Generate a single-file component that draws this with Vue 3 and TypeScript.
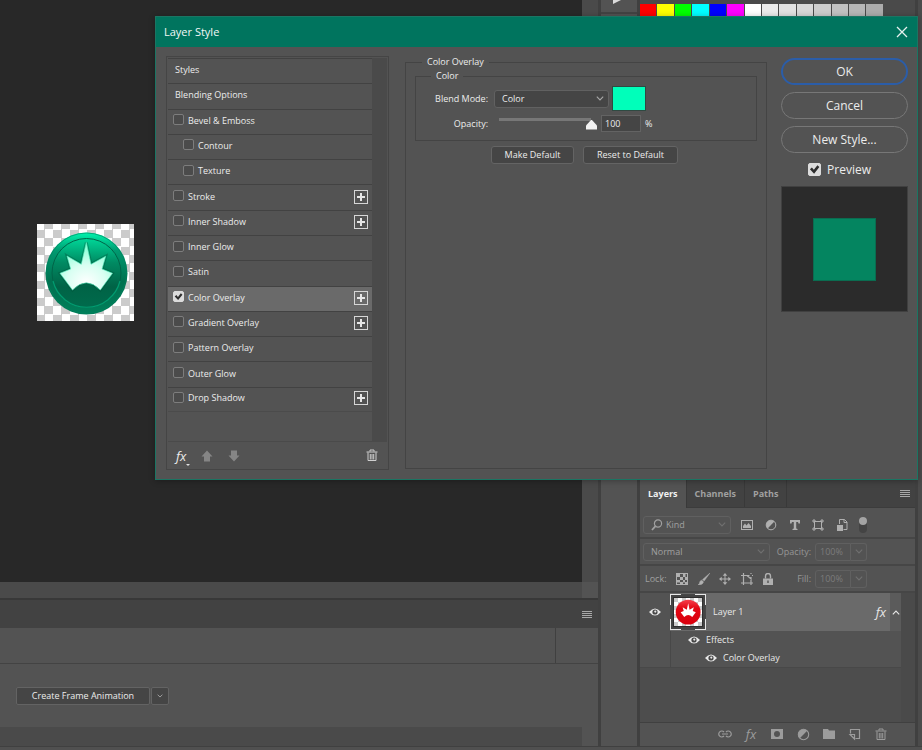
<script setup lang="ts">
import { ref } from 'vue'

interface Effect {
  name: string
  on: boolean
  nested?: boolean
  plus?: boolean
}

const effects = ref<Effect[]>([
  { name: 'Bevel & Emboss', on: false },
  { name: 'Contour', on: false, nested: true },
  { name: 'Texture', on: false, nested: true },
  { name: 'Stroke', on: false, plus: true },
  { name: 'Inner Shadow', on: false, plus: true },
  { name: 'Inner Glow', on: false },
  { name: 'Satin', on: false },
  { name: 'Color Overlay', on: true, plus: true },
  { name: 'Gradient Overlay', on: false, plus: true },
  { name: 'Pattern Overlay', on: false },
  { name: 'Outer Glow', on: false },
  { name: 'Drop Shadow', on: false, plus: true },
])
const selected = ref('Color Overlay')

const swatches: string[] = [
  '#ff0000', '#ffff00', '#00ff00', '#00ffff', '#0000ff', '#ff00ff', '#ffffff',
  '#ebebeb', '#e1e1e1', '#d7d7d7', '#cccccc', '#c2c2c2', '#b7b7b7', '#acacac',
]

const tabs = ['Layers', 'Channels', 'Paths']
const activeTab = ref('Layers')

const blendMode = ref('Color')
const opacity = ref(100)
const preview = ref(true)
</script>

<template>
  <div class="app">
    <svg class="defs" aria-hidden="true">
      <defs>
        <linearGradient id="rim" x1="0" y1="0" x2="0" y2="1">
          <stop offset="0" stop-color="#00f5ae" />
          <stop offset="0.22" stop-color="#009a70" />
          <stop offset="0.6" stop-color="#00704f" />
          <stop offset="1" stop-color="#007f5a" />
        </linearGradient>
        <linearGradient id="face" x1="0" y1="0" x2="0" y2="1">
          <stop offset="0" stop-color="#00d698" />
          <stop offset="0.35" stop-color="#008a62" />
          <stop offset="0.7" stop-color="#006346" />
          <stop offset="1" stop-color="#006b4c" />
        </linearGradient>
        <radialGradient id="crown" cx="0.5" cy="0.85" r="0.75">
          <stop offset="0" stop-color="#ffffff" />
          <stop offset="0.5" stop-color="#d9fff2" />
          <stop offset="1" stop-color="#8dffd8" />
        </radialGradient>
        <linearGradient id="red" x1="0" y1="0" x2="0" y2="1">
          <stop offset="0" stop-color="#f5404d" />
          <stop offset="0.35" stop-color="#e30613" />
          <stop offset="1" stop-color="#d9000d" />
        </linearGradient>
        <path
          id="crown-shape"
          d="M49.3 18.5 54 40.3 68.7 32.2 65 45 75.5 49.3 63.3 66Q49.3 51.500 35.500 66L23 49.300 33.700 45 30 32 44.300 40.300Z"
        />
        <symbol id="eye" viewBox="0 0 12 8">
          <path d="M0 4Q6-3.200 12 4 6 11.200 0 4Z" fill="currentColor" />
          <circle cx="6" cy="4" r="2.600" fill="#484848" />
          <circle cx="6.300" cy="3.600" r="1.100" fill="currentColor" />
        </symbol>
        <symbol id="trash" viewBox="0 0 12 13">
          <g fill="none" stroke="currentColor">
            <path d="M0.500 3H11.500M4 2.500V1H8V2.500" />
            <path d="M2 3.500V11.500H10V3.500M4.300 5V10.500M6 5V10.500M7.700 5V10.500" />
          </g>
        </symbol>
        <symbol id="chevron" viewBox="0 0 8 5">
          <path d="M0.800 0.700 4 3.900 7.200 0.700" fill="none" stroke="currentColor" stroke-width="1.100" />
        </symbol>
        <symbol id="half" viewBox="0 0 12 12">
          <circle cx="6" cy="6" r="4.800" fill="none" stroke="currentColor" />
          <path d="M9.400 2.600A4.800 4.800 0 0 0 2.600 9.400Z" fill="currentColor" />
        </symbol>
      </defs>
    </svg>

    <main class="work">
      <div class="canvas">
        <svg class="art" viewBox="0 0 97 97" role="img" aria-label="Crown badge">
          <circle cx="49.500" cy="49.500" r="41" fill="url(#rim)" />
          <circle cx="49.500" cy="49" r="40" fill="none" stroke="#00825d" stroke-opacity="0.600" />
          <circle cx="49.500" cy="49" r="34.500" fill="url(#face)" stroke="#006448" />
          <path d="M16 57A34.500 34.500 0 0 0 83 57" fill="none" stroke="#009c70" stroke-width="1.200" />
          <use href="#crown-shape" fill="#004d36" opacity="0.350" stroke="#004d36" stroke-width="3" />
          <use href="#crown-shape" fill="url(#crown)" stroke="#5cf2c3" stroke-width="0.600" />
        </svg>
      </div>
      <div class="vbar"></div>
      <div class="hbar"></div>
      <div class="corner"></div>
      <section class="timeline">
        <header>
          <button class="menu" aria-label="Timeline menu"><i></i><i></i><i></i><i></i></button>
        </header>
        <div class="ruler"><span></span></div>
        <div class="frames">
          <button class="create">Create Frame Animation</button>
          <button class="more" aria-label="Animation type"><svg width="6" height="4"><use href="#chevron" /></svg></button>
        </div>
        <div class="scroll"></div>
      </section>
    </main>

    <aside class="strip">
      <button class="play" aria-label="Actions">
        <svg width="10" height="8" viewBox="0 0 10 8"><path d="M0 0V8L10 3Z" fill="#dcdcdc" /></svg>
      </button>
    </aside>

    <aside class="panels">
      <div class="swatch-panel">
        <div class="swatches">
          <button v-for="c in swatches" :key="c" :aria-label="c" :style="{ background: c }"></button>
        </div>
      </div>

      <section class="layers">
        <nav class="tabs">
          <button
            v-for="t in tabs"
            :key="t"
            :class="{ active: t === activeTab }"
            @click="activeTab = t"
          >{{ t }}</button>
          <button class="menu" aria-label="Panel menu"><i></i><i></i><i></i><i></i></button>
        </nav>

        <div class="bar filter">
          <label class="pick kind">
            <svg width="12" height="12" viewBox="0 0 12 12">
              <g fill="none" stroke="currentColor">
                <circle cx="7" cy="4.500" r="3.600" stroke-width="1.200" />
                <path d="M4.500 7.200 1 11" stroke-width="1.800" />
              </g>
            </svg>
            <select aria-label="Filter type"><option>Kind</option></select>
            <svg class="chev" width="8" height="5"><use href="#chevron" /></svg>
          </label>
          <div class="tools">
            <button aria-label="Pixel layers">
              <svg width="12" height="12" viewBox="0 0 12 12">
                <rect x="0.500" y="1.500" width="11" height="9" fill="none" stroke="currentColor" />
                <path d="M2 9V7L4 4.500 5.500 6.500 7.500 4 10 7V9Z" fill="currentColor" />
              </svg>
            </button>
            <button aria-label="Adjustment layers"><svg width="12" height="12"><use href="#half" /></svg></button>
            <button aria-label="Type layers">
              <svg width="12" height="12" viewBox="0 0 12 12">
                <path d="M1 1H11V4.500H9.500L9 3H7.200V9.500L8.500 10V11H3.500V10L4.800 9.500V3H3L2.500 4.500H1Z" fill="currentColor" />
              </svg>
            </button>
            <button aria-label="Shape layers">
              <svg width="12" height="12" viewBox="0 0 12 12">
                <g fill="none" stroke="currentColor">
                  <path d="M2.500 2.500H9.500V9.500H2.500Z" />
                  <path d="M1 1H3V3H1ZM9 1H11V3H9ZM1 9H3V11H1ZM9 9H11V11H9Z" />
                </g>
              </svg>
            </button>
            <button aria-label="Smart objects">
              <svg width="12" height="12" viewBox="0 0 12 12">
                <path d="M3.500 5V0.500H8.500L11 3V10.500H7.500M8 0.500V3.500H11" fill="none" stroke="currentColor" />
                <path d="M1 6H7V12H1Z" fill="currentColor" />
              </svg>
            </button>
          </div>
          <button class="toggle" aria-label="Toggle filter"><span></span></button>
        </div>

        <div class="bar">
          <label class="pick mode">
            <select aria-label="Layer blend mode"><option>Normal</option></select>
            <svg class="chev" width="8" height="5"><use href="#chevron" /></svg>
          </label>
          <div class="amount">
            <label for="layer-opacity">Opacity:</label>
            <input id="layer-opacity" value="100%" />
            <button aria-label="Opacity slider"><svg width="8" height="5"><use href="#chevron" /></svg></button>
          </div>
        </div>

        <div class="bar">
          <span class="lock">Lock:</span>
          <div class="tools locks">
            <button aria-label="Lock transparent pixels">
              <svg width="12" height="12" viewBox="0 0 12 12">
                <rect x="0.500" y="0.500" width="11" height="11" fill="none" stroke="currentColor" />
                <path d="M1 1H4V4H1ZM7 1H9.500V4H7ZM4 4H7V7H4ZM9 4H11V7H9ZM1 7H4V9.500H1ZM7 7H9V9.500H7ZM4 9H7V11H4ZM9 9H11V11H9Z" fill="currentColor" />
              </svg>
            </button>
            <button aria-label="Lock image pixels">
              <svg width="12" height="12" viewBox="0 0 12 12">
                <path d="M12 0 6.200 8 4.500 6.500ZM3.800 7.200 5.500 8.800Q5 12 0 12 1.800 10.500 1.800 8.700 2.500 7.200 3.800 7.200Z" fill="currentColor" stroke="currentColor" stroke-width="0.400" />
              </svg>
            </button>
            <button aria-label="Lock position">
              <svg width="12" height="12" viewBox="0 0 12 12">
                <path d="M6 1V11M1 6H11" stroke="currentColor" />
                <path d="M6 0 8.300 2.700H3.700ZM6 12 8.300 9.300H3.700ZM0 6 2.700 3.700V8.300ZM12 6 9.300 3.700V8.300Z" fill="currentColor" />
              </svg>
            </button>
            <button aria-label="Lock artboard nesting">
              <svg width="12" height="12" viewBox="0 0 12 12">
                <path d="M0 2.500H8.500M2.500 0V12M0 10H12M10 5V12M6 2.500 10 6V4M10 0V1M11 2.500H12" fill="none" stroke="currentColor" stroke-width="1.200" />
              </svg>
            </button>
            <button aria-label="Lock all">
              <svg width="12" height="12" viewBox="0 0 12 12">
                <path d="M3.500 5.500V3A2.500 2.500 0 0 1 8.500 3V5.500" fill="none" stroke="currentColor" stroke-width="1.400" />
                <path d="M1 5.500H11V12H1ZM5.300 7.500V10H6.700V7.500Z" fill="currentColor" fill-rule="evenodd" />
              </svg>
            </button>
          </div>
          <div class="amount">
            <label for="layer-fill">Fill:</label>
            <input id="layer-fill" value="100%" />
            <button aria-label="Fill slider"><svg width="8" height="5"><use href="#chevron" /></svg></button>
          </div>
        </div>

        <div class="stack">
          <div class="rows">
            <div class="layer">
              <button class="vis" aria-label="Layer visibility"><svg width="12" height="8"><use href="#eye" /></svg></button>
              <div class="entry">
                <span class="thumb">
                  <svg viewBox="0 0 97 97" aria-hidden="true">
                    <circle cx="49" cy="49" r="43" fill="url(#red)" />
                    <use href="#crown-shape" fill="#fff" />
                  </svg>
                </span>
                <span class="name">Layer 1</span>
                <span class="fx">fx</span>
              </div>
              <button class="fold" aria-label="Collapse effects"><svg width="8" height="5"><use href="#chevron" /></svg></button>
            </div>
            <div class="sub">
              <div>
                <svg width="12" height="8"><use href="#eye" /></svg><span>Effects</span>
              </div>
              <div class="deep">
                <svg width="12" height="8"><use href="#eye" /></svg><span>Color Overlay</span>
              </div>
            </div>
          </div>
          <div class="track"></div>
        </div>

        <footer>
          <button aria-label="Link layers">
            <svg width="14" height="14" viewBox="0 0 14 14">
              <path d="M6 5A3 3 0 1 0 6 9M8 5A3 3 0 1 1 8 9M4 7H10" fill="none" stroke="currentColor" stroke-width="1.200" />
            </svg>
          </button>
          <button class="fx" aria-label="Add layer style">fx</button>
          <button aria-label="Add mask">
            <svg width="14" height="14" viewBox="0 0 14 14">
              <path d="M1 2H13V12H1ZM7 4A3 3 0 1 0 7 10 3 3 0 1 0 7 4Z" fill="currentColor" fill-rule="evenodd" />
            </svg>
          </button>
          <button aria-label="New adjustment layer"><svg width="13" height="13"><use href="#half" /></svg></button>
          <button aria-label="New group">
            <svg width="14" height="14" viewBox="0 0 14 14">
              <path d="M1 2H6L7 3.500H13V12H1Z" fill="currentColor" />
            </svg>
          </button>
          <button aria-label="New layer">
            <svg width="14" height="14" viewBox="0 0 14 14">
              <path d="M2.500 6.500V2.500H11.500V11.500H7.500M2 7.500H6.500V12Z" fill="none" stroke="currentColor" stroke-width="1.200" />
            </svg>
          </button>
          <button aria-label="Delete layer"><svg width="12" height="13"><use href="#trash" /></svg></button>
        </footer>
      </section>
    </aside>

    <div class="edge"></div>

    <div class="dialog" role="dialog" aria-labelledby="dialog-title">
      <header class="title">
        <span id="dialog-title">Layer Style</span>
        <button aria-label="Close">
          <svg width="12" height="12" viewBox="0 0 12 12">
            <path d="M1 1 11 11M11 1 1 11" stroke="#e6f1ef" stroke-width="1.300" />
          </svg>
        </button>
      </header>
      <div class="body">
        <div class="styles">
          <div class="scroller">
            <ul>
              <li><button class="link">Styles</button></li>
              <li><button class="link">Blending Options</button></li>
              <li
                v-for="e in effects"
                :key="e.name"
                :class="{ nested: e.nested, current: e.name === selected }"
                @click="selected = e.name"
              >
                <label><input v-model="e.on" type="checkbox" />{{ e.name }}</label>
                <button v-if="e.plus" class="plus" :aria-label="'Add ' + e.name">
                  <svg width="14" height="14" viewBox="0 0 14 14">
                    <rect x="0.500" y="0.500" width="13" height="13" fill="none" stroke="#d6d6d6" />
                    <path d="M7 3V11M3 7H11" stroke="#e6e6e6" stroke-width="2" />
                  </svg>
                </button>
              </li>
            </ul>
            <div class="track"></div>
          </div>
          <div class="actions">
            <button class="fx" aria-label="Effects menu">fx<span></span></button>
            <button aria-label="Move up">
              <svg width="12" height="12" viewBox="0 0 12 12"><path d="M6 0.500 11.500 6.500H9V11.500H3V6.500H0.500Z" fill="#858585" /></svg>
            </button>
            <button aria-label="Move down">
              <svg width="12" height="12" viewBox="0 0 12 12"><path d="M6 11.500 11.500 5.500H9V0.500H3V5.500H0.500Z" fill="#858585" /></svg>
            </button>
            <button class="bin" aria-label="Delete effect"><svg width="12" height="13"><use href="#trash" /></svg></button>
          </div>
        </div>

        <fieldset class="overlay">
          <legend>Color Overlay</legend>
          <fieldset class="group">
            <legend>Color</legend>
            <div class="field blend">
              <label for="blend">Blend Mode:</label>
              <span class="pick">
                <select id="blend" v-model="blendMode"><option>Color</option><option>Normal</option></select>
                <svg class="chev" width="8" height="5"><use href="#chevron" /></svg>
              </span>
              <button class="color" aria-label="Set overlay color"></button>
            </div>
            <div class="field">
              <label for="opacity">Opacity:</label>
              <input v-model.number="opacity" class="slide" type="range" min="0" max="100" aria-label="Opacity slider" />
              <input id="opacity" v-model.number="opacity" class="num" />
              <span class="unit">%</span>
            </div>
          </fieldset>
          <div class="defaults">
            <button>Make Default</button>
            <button>Reset to Default</button>
          </div>
        </fieldset>

        <div class="side">
          <button class="ok">OK</button>
          <button>Cancel</button>
          <button>New Style...</button>
          <label><input v-model="preview" type="checkbox" />Preview</label>
          <div class="sample"><span></span></div>
        </div>
      </div>
    </div>
  </div>
</template>

<style>
body {
  background: #424242;
}
</style>

<style scoped>
.app {
  position: relative;
  box-sizing: border-box;
  min-height: 100vh;
  display: grid;
  grid-template-columns: minmax(0, 1fr) 36px 275px 4px;
  column-gap: 3px;
  border-bottom: 3px solid #505050;
  padding-bottom: 1px;
  background: #404040;
  color: #ececec;
  font: 9px/12px 'Open Sans', 'Noto Sans', sans-serif;
}
.app *,
.app *::before,
.app *::after {
  box-sizing: border-box;
}
.defs {
  position: absolute;
  width: 0;
  height: 0;
}
svg {
  display: block;
  flex: none;
}
button,
input,
select {
  margin: 0;
  padding: 0;
  border: 0;
  background: none;
  color: inherit;
  font: inherit;
  appearance: none;
}
button {
  display: flex;
  align-items: center;
  justify-content: center;
}

.work {
  display: grid;
  grid-template-columns: minmax(0, 1fr) 16px;
  grid-template-rows: minmax(0, 1fr) 16px auto;
}
.canvas {
  position: relative;
  background: #282828;
}
.art {
  position: absolute;
  left: 37px;
  top: 224px;
  width: 97px;
  height: 97px;
  background: repeating-conic-gradient(#cbcbcb 0 25%, #fff 0 50%) -1px -3px / 17px 17px;
}
.vbar,
.hbar {
  background: #4a4a4a;
}
.corner {
  background: #535353;
}
.timeline {
  grid-column: 1 / -1;
  border-top: 2px solid #383838;
  background: #535353;
}
.timeline header {
  display: flex;
  justify-content: flex-end;
  height: 28px;
  padding-right: 6px;
  background: #424242;
}
.menu i {
  display: block;
  width: 10px;
  height: 1px;
  background: #a8a8a8;
}
.menu {
  flex-direction: column;
  gap: 1px;
}
.ruler {
  display: flex;
  justify-content: flex-end;
  height: 36px;
  border-bottom: 1px solid #434343;
}
.ruler span {
  width: 43px;
  border-left: 1px solid #404040;
}
.frames {
  display: flex;
  gap: 1px;
  padding: 23px 16px 22px;
}
.frames button {
  height: 18px;
  border: 1px solid #636363;
  border-radius: 2px;
  background: #454545;
}
.frames .create {
  width: 134px;
}
.frames .more {
  width: 18px;
  color: #b0b0b0;
}
.scroll {
  height: 19px;
  margin-right: 16px;
  background: #4a4a4a;
}

.strip {
  background: #535353;
}
.play {
  width: 100%;
  height: 14px;
  align-items: flex-start;
  padding-right: 2px;
  border-bottom: 2px solid #434343;
}
.play svg {
  margin-top: -4px;
}

.panels {
  display: flex;
  flex-direction: column;
  min-width: 0;
}
.swatch-panel {
  height: 480px;
  padding-top: 4px;
  background: #4a4a4a;
}
.swatches {
  display: flex;
  gap: 1px;
  width: 243px;
}
.swatches button {
  flex: 1;
  height: 16px;
}
.edge {
  background: #4b4b4b;
}

.layers {
  flex: 1;
  display: flex;
  flex-direction: column;
  background: #535353;
  color: #a0a0a0;
}
.tabs {
  display: flex;
  height: 28px;
  background: #424242;
  border-bottom: 1px solid #3c3c3c;
  font-weight: 700;
}
.tabs button {
  padding: 0 8px;
  border-right: 1px solid #393939;
}
.tabs .active {
  height: 28px;
  background: #535353;
  color: #f2f2f2;
}
.tabs .menu {
  margin-left: auto;
  padding: 0 5px;
  border: 0;
}
.bar {
  display: flex;
  align-items: center;
  height: 27px;
  padding: 0 48px 0 3px;
  border-bottom: 2px solid #464646;
}
.filter {
  height: 31px;
  padding-top: 4px;
}
.pick {
  display: flex;
  align-items: center;
  gap: 3px;
  height: 18px;
  padding: 0 4px 0 7px;
  border: 1px solid #606060;
  border-radius: 3px;
}
.pick select {
  flex: 1;
  min-width: 0;
}
.kind {
  width: 88px;
}
.mode {
  width: 127px;
}
.layers .chev,
.amount svg {
  color: #707070;
}
.tools {
  display: flex;
  justify-content: space-between;
  width: 107px;
  margin-left: 10px;
  color: #b0b0b0;
}
.locks {
  width: 98px;
  margin-left: 8px;
}
.toggle {
  width: 8px;
  height: 16px;
  margin-left: 11px;
  align-items: flex-start;
  border-radius: 4px;
  background: #444;
}
.toggle span {
  width: 8px;
  height: 8px;
  border-radius: 4px;
  background: #a4a4a4;
}
.lock {
  width: 25px;
  padding-left: 2px;
}
.amount {
  display: flex;
  align-items: center;
  margin-left: auto;
  color: #7c7c7c;
}
.amount label {
  margin-right: 4px;
  color: #969696;
}
.amount input,
.amount button {
  height: 18px;
  border: 1px solid #606060;
}
.amount input {
  width: 36px;
  padding-left: 4px;
  border-radius: 3px 0 0 3px;
}
.amount button {
  width: 16px;
  border-left: 0;
  border-radius: 0 3px 3px 0;
}
.stack {
  flex: 1;
  display: flex;
  background: #4d4d4d;
  color: #e8e8e8;
}
.rows {
  flex: 1;
}
.stack .track {
  width: 14px;
  background: #4a4a4a;
}
.layer {
  display: flex;
  height: 38px;
  background: #535353;
}
.vis {
  width: 30px;
}
.entry {
  flex: 1;
  display: flex;
  align-items: center;
  padding-right: 4px;
  background: #6a6a6a;
}
.thumb {
  width: 36px;
  height: 36px;
  padding: 3px;
  background:
    linear-gradient(90deg, #e8e8e8 11px, #484848 11px 25px, #e8e8e8 25px) 0 0 / 100% 1px no-repeat,
    linear-gradient(90deg, #e8e8e8 11px, #484848 11px 25px, #e8e8e8 25px) 0 100% / 100% 1px no-repeat,
    linear-gradient(#e8e8e8 11px, #484848 11px 25px, #e8e8e8 25px) 0 0 / 1px 100% no-repeat,
    linear-gradient(#e8e8e8 11px, #484848 11px 25px, #e8e8e8 25px) 100% 0 / 1px 100% no-repeat,
    #444;
}
.thumb svg {
  width: 30px;
  height: 30px;
  border: 1px solid #2e2e2e;
  background: repeating-conic-gradient(#fff 0 25%, #cbcbcb 0 50%) 0 0 / 8px 8px;
}
.name {
  flex: 1;
  padding-left: 7px;
}
.fx {
  font: italic 13px/14px 'Open Sans', 'Noto Sans', sans-serif;
}
.fold {
  width: 11px;
  background: #5b5b5b;
}
.fold svg {
  transform: rotate(180deg);
}
.sub {
  padding-left: 30px;
  border-bottom: 1px solid #484848;
  background: #535353;
}
.sub div {
  display: flex;
  align-items: center;
  gap: 6px;
  height: 18px;
  padding-left: 17px;
  border-left: 1px solid #484848;
}
.sub .deep {
  padding-left: 34px;
}
.layers footer {
  display: flex;
  align-items: center;
  justify-content: flex-end;
  gap: 12px;
  height: 24px;
  padding: 0 27px 1px 0;
  border-top: 1px solid #404040;
  color: #9c9c9c;
}
.layers footer button {
  width: 14px;
  height: 20px;
}

.dialog {
  position: absolute;
  left: 155px;
  right: 4px;
  top: 16px;
  height: 464px;
  display: flex;
  flex-direction: column;
  border: 1px solid #1b7563;
  background: #535353;
  box-shadow: 0 1px 6px rgba(0, 0, 0, 0.3);
}
.title {
  display: flex;
  align-items: center;
  justify-content: space-between;
  height: 30px;
  padding: 0 9px 0 8px;
  background: #00745e;
  color: #f2f8f7;
  font-size: 11px;
}
.body {
  flex: 1;
  display: flex;
  min-height: 0;
  padding: 9px 9px 9px 10px;
}
.styles {
  display: flex;
  flex-direction: column;
  width: 223px;
  padding: 1px;
  border: 1px solid #454545;
}
.scroller {
  flex: 1;
  display: flex;
  border-bottom: 1px solid #4a4a4a;
}
.styles ul {
  flex: 1;
  display: grid;
  grid-template-rows: repeat(14, 1fr);
  height: 354px;
  margin: 0;
  padding: 0;
  list-style: none;
}
.styles .track {
  width: 15px;
  background: #4a4a4a;
}
.styles li {
  display: flex;
  align-items: center;
  justify-content: space-between;
  padding: 0 4px 2px 5px;
  border-top: 1px solid #424242;
}
.styles li:last-child {
  border-bottom: 1px solid #4b4b4b;
}
.styles .nested {
  padding-left: 15px;
}
.styles .current {
  background: #6a6a6a;
}
.link {
  padding-left: 2px;
}
.styles label {
  display: flex;
  align-items: center;
  gap: 4px;
}
input[type='checkbox'] {
  display: grid;
  place-items: center;
  width: 11px;
  height: 11px;
  border: 1px solid #7d7d7d;
  border-radius: 2px;
  background: #4b4b4b;
}
.styles input[type='checkbox'] {
  margin-bottom: 2px;
}
input[type='checkbox']:checked {
  border-color: #dcdcdc;
  background: #dcdcdc;
}
input[type='checkbox']:checked::after {
  content: '';
  width: 100%;
  height: 100%;
  background: #2e2e2e;
  clip-path: polygon(8% 48%, 26% 32%, 44% 52%, 76% 12%, 94% 28%, 46% 88%);
}
.actions {
  display: flex;
  align-items: center;
  gap: 15px;
  height: 26px;
  padding: 1px 9px 0 8px;
}
.actions .fx {
  position: relative;
}
.actions .fx span {
  position: absolute;
  right: -4px;
  bottom: -3px;
  border: 2px solid transparent;
  border-top-color: #e0e0e0;
  border-bottom: 0;
}
.bin {
  margin-left: auto;
  color: #cfcfcf;
}

fieldset {
  min-width: 0;
  margin: 0;
  border: 1px solid #444;
}
legend {
  padding: 0 5px;
  line-height: 12px;
}
.overlay {
  flex: 1;
  margin: 0 14px 1px 16px;
  padding: 2px 9px 0;
}
.overlay > legend {
  margin-left: 7px;
}
.group {
  padding: 4px 4px 8px;
}
.group > legend {
  margin-left: 11px;
}
.field {
  display: flex;
  align-items: center;
}
.field > label {
  width: 68px;
  margin-right: 6px;
  text-align: right;
  white-space: nowrap;
}
.blend {
  margin-bottom: 4px;
}
.blend .pick {
  width: 115px;
  margin-right: 3px;
  border-color: #616161;
  background: #454545;
}
.blend .chev {
  color: #a8a8a8;
}
.color {
  width: 34px;
  height: 25px;
  border: 1px solid #2f4a42;
  background: #00ffba;
}
.slide {
  width: 98px;
  height: 16px;
  margin: 0 4px 0 5px;
}
.slide::-webkit-slider-runnable-track {
  height: 12px;
  background: linear-gradient(#777, #777) 0 0 / 92px 3px no-repeat;
}
.slide::-webkit-slider-thumb {
  appearance: none;
  width: 11px;
  height: 10px;
  margin-top: 2px;
  background: #f2f2f2;
  clip-path: polygon(50% 0, 100% 60%, 100% 100%, 0 100%, 0 60%);
}
.num {
  width: 40px;
  height: 17px;
  padding-left: 3px;
  border: 1px solid #636363;
  background: #454545;
}
.unit {
  padding-left: 4px;
}
.defaults {
  display: flex;
  gap: 9px;
  padding: 5px 0 0 76px;
}
.defaults button {
  height: 18px;
  border: 1px solid #646464;
  border-radius: 3px;
  background: #454545;
  width: 83px;
}
.defaults button + button {
  width: 95px;
}

.side {
  width: 127px;
  display: flex;
  flex-direction: column;
  gap: 7px;
  padding-top: 2px;
  font-size: 12px;
}
.side button {
  height: 27px;
  border: 1px solid #777;
  border-radius: 14px;
}
.side .ok {
  border: 2px solid #2b5da8;
}
.side label {
  display: flex;
  align-items: center;
  justify-content: center;
  gap: 6px;
  height: 19px;
  padding-right: 10px;
}
.side input[type='checkbox'] {
  width: 13px;
  height: 13px;
}
.sample {
  display: grid;
  place-items: center;
  height: 126px;
  border: 1px solid #404040;
  background: #2b2b2b;
}
.sample span {
  width: 63px;
  height: 63px;
  border: 1px solid #0a6c50;
  background: #048560;
}
</style>
